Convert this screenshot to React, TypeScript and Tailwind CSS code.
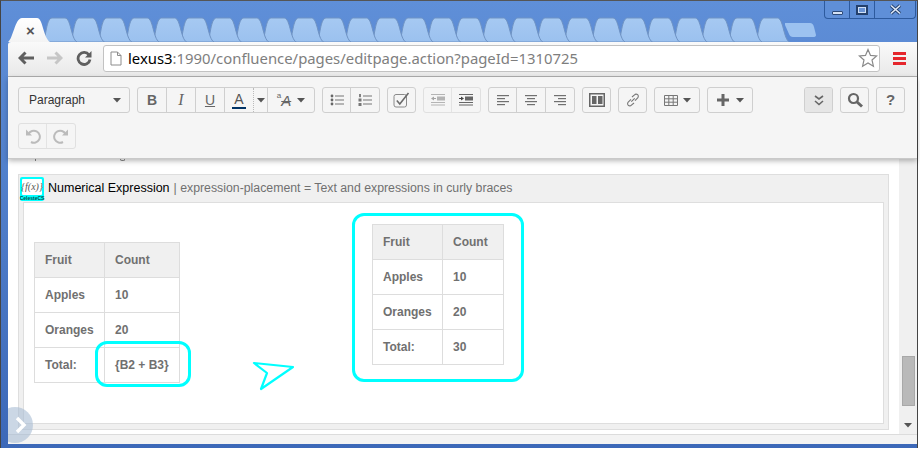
import React from "react";

const tabXs = Array.from({ length: 27 }, (_, i) => 45 + i * 27.4);

function TabStrip() {
  return (
    <div className="relative h-[41px] shrink-0">
      <svg width="920" height="41" className="block -ml-[8px]">
        <defs>
          <linearGradient id="tabg" x1="0" y1="0" x2="0" y2="1">
            <stop offset="0" stopColor="#a6c9f2" />
            <stop offset="1" stopColor="#9bc1ef" />
          </linearGradient>
          <linearGradient id="act" x1="0" y1="0" x2="0" y2="1">
            <stop offset="0" stopColor="#ffffff" />
            <stop offset="1" stopColor="#f4f4f4" />
          </linearGradient>
        </defs>
        {[...tabXs].reverse().map((x, i) => (
          <path
            key={i}
            d={`M${x - 2} 41 C${x + 1} 38 ${x + 1} 17 ${x + 7} 17 L${x + 20} 17 C${x + 26} 17 ${x + 26} 38 ${x + 32} 41 Z`}
            fill="url(#tabg)"
            stroke="#6f93c4"
            strokeWidth="1"
          />
        ))}
        <path d="M8 41 C13 38 15 17 22 17 L37 17 C43 17 43 36 50 41 Z" fill="url(#act)" />
        <path d="M785 22 L810 22 Q813 22 814 26 L816 34 Q816 36 813 36 L793 36 Q790 36 789 33 L785 24 Z" fill="#9cc2f0" />
      </svg>
      <span className="absolute left-[18px] top-[22px] text-[15px] leading-[15px] font-bold text-[#555] font-['Liberation_Sans',sans-serif]">×</span>
      <div className="absolute left-[816px] top-0 w-[92px] h-[18px] flex border border-t-0 border-[#2d5a9e] rounded-b-[4px] bg-[#5f8fd8]">
        <div className="w-[25px] border-r border-[#2d5a9e] flex items-end justify-center pb-[3px]"><div className="w-[11px] h-[4px] rounded-[1px] bg-[#d5e2f5] border border-[#2d4a78]" /></div>
        <div className="w-[25px] border-r border-[#2d5a9e] flex items-center justify-center"><div className="w-[12px] h-[10px] border-2 border-[#24406c] bg-[#cfdff5] flex items-center justify-center"><div className="w-[6px] h-[4px] bg-[#6a94d6]" /></div></div>
        <div className="flex-1 flex items-center justify-center">
          <svg width="13" height="11" viewBox="0 0 13 11"><path d="M2 1.5 L11 9.5 M11 1.5 L2 9.5" stroke="#24406c" strokeWidth="3.4" /><path d="M2 1.5 L11 9.5 M11 1.5 L2 9.5" stroke="#dfe9f8" strokeWidth="1.6" /></svg>
        </div>
      </div>
    </div>
  );
}

function Omnibar() {
  return (
    <div className="h-[35px] shrink-0 flex items-center bg-gradient-to-b from-[#fafafa] to-[#e9e9e9] border-b border-[#b0b0b0] pl-[10px] pb-[2px] rounded-tl-[3px]">
      <svg width="16" height="14" viewBox="0 0 16 14"><path d="M7.5 1.5 L2 7 L7.5 12.5 M2.5 7 H16" fill="none" stroke="#5f5f5f" strokeWidth="3" /></svg>
      <svg width="16" height="14" viewBox="0 0 16 14" className="ml-[13px]"><path d="M8.5 1.5 L14 7 L8.5 12.5 M13.5 7 H0" fill="none" stroke="#c6c6c6" strokeWidth="3" /></svg>
      <svg width="16" height="16" viewBox="0 0 16 16" className="ml-[13px]"><path d="M13 5 A6 6 0 1 0 14 9.5" fill="none" stroke="#5f5f5f" strokeWidth="2.8" /><path d="M15.5 1 V7.5 H9 Z" fill="#5f5f5f" /></svg>
      <div className="flex-1 ml-[11px] mr-[13px] h-[27px] bg-white border border-[#c2c2c2] rounded-[3px] flex items-center pl-[6px] pr-0">
        <svg width="12" height="15" viewBox="0 0 12 15" className="mr-[6px] shrink-0"><path d="M1 1 H7.5 L11 4.5 V14 H1 Z M7.5 1 V4.5 H11" fill="#fff" stroke="#8c8c8c" /></svg>
        <span className="text-[14.87px] leading-[20px] text-[#7e7e7e] whitespace-nowrap font-['Noto_Sans',sans-serif]"><span className="text-black">lexus3</span>:1990/confluence/pages/editpage.action?pageId=1310725</span>
        <svg width="20" height="20" viewBox="0 0 20 20" className="ml-auto mr-[1px]"><path d="M10 1.5 L12.5 7.4 L18.6 7.9 L14 12 L15.4 18.2 L10 15 L4.6 18.2 L6 12 L1.4 7.9 L7.5 7.4 Z" fill="#fff" stroke="#8a8a8a" strokeWidth="1.2" /></svg>
      </div>
      <div className="w-[13px] mr-[11px] flex flex-col gap-[2px]">
        <div className="h-[3px] bg-[#e5262c]" /><div className="h-[3px] bg-[#e5262c]" /><div className="h-[3px] bg-[#e5262c]" />
      </div>
    </div>
  );
}

const Caret = ({ c = "#555" }: { c?: string }) => <svg width="8" height="5" viewBox="0 0 8 5"><path d="M0 0 H8 L4 4.5 Z" fill={c} /></svg>;

function Btn({ w = 28, children, dim, active }: { w?: number; children?: React.ReactNode; dim?: boolean; active?: boolean }) {
  return (
    <div
      style={{ width: w }}
      className={`h-full flex items-center justify-center border-r border-[#cfcfcf] last:border-r-0 ${active ? "bg-[#e6e6e6] rounded-[2px]" : ""} ${dim ? "opacity-45" : ""}`}
    >
      {children}
    </div>
  );
}

const Group = ({ children, dim }: { children: React.ReactNode; dim?: boolean }) => (
  <div className={`flex h-[26px] border rounded-[3px] bg-[#f5f5f5] ${dim ? "border-[#e0e0e0]" : "border-[#cfcfcf]"}`}>{children}</div>
);

const Lines = ({ rows }: { rows: [number, number][] }) => (
  <svg width="14" height="12" viewBox="0 0 14 12">
    {rows.map(([x, w], i) => <rect key={i} x={x} y={i * 3 + 1} width={w} height="1.2" fill="#707070" />)}
  </svg>
);

function Toolbar() {
  const f = "font-['Liberation_Serif',serif]";
  return (
    <div className="h-[82px] shrink-0 bg-[#f5f5f5] pt-[10px] pl-[10px] pr-[12px] flex flex-col gap-[10px] border-b border-[#c9c9c9] shadow-[0_2px_5px_rgba(0,0,0,0.28)] relative z-10">
      <div className="flex gap-[7px] items-center">
        <Group>
          <div className="w-[110px] flex items-center justify-between pl-[10px] pr-[8px] text-[12px] text-[#333] font-['Liberation_Sans',sans-serif]">Paragraph <Caret /></div>
        </Group>
        <Group>
          <Btn w={29}><span className="font-['Liberation_Sans',sans-serif] font-bold text-[14px] text-[#666]">B</span></Btn>
          <Btn w={29}><span className={`${f} italic text-[16px] text-[#666]`}>I</span></Btn>
          <Btn w={29}><span className="font-['Liberation_Sans',sans-serif] text-[14px] leading-[14px] text-[#666] underline">U</span></Btn>
          <div className="w-[29px] flex flex-col items-center justify-center border-r border-dotted border-[#bbb]">
            <span className="font-['Liberation_Sans',sans-serif] text-[14px] leading-[14px] text-[#555]">A</span>
            <div className="w-[14px] h-[2px] bg-[#003366] mt-[1px]" />
          </div>
          <Btn w={14}><Caret c="#555" /></Btn>
          <div className="w-[46px] flex items-center justify-center gap-[6px]">
            <span className="font-['Liberation_Sans',sans-serif] text-[#666] leading-none flex"><span className="text-[8px] -mt-[1px]">a</span><span className="italic text-[15px] line-through">A</span></span>
            <Caret />
          </div>
        </Group>
        <Group>
          <Btn><svg width="14" height="12" viewBox="0 0 14 12"><circle cx="2" cy="2" r="1.4" fill="#666"/><circle cx="2" cy="6" r="1.4" fill="#666"/><circle cx="2" cy="10" r="1.4" fill="#666"/><rect x="5" y="1.5" width="9" height="1" fill="#777"/><rect x="5" y="5.5" width="9" height="1" fill="#777"/><rect x="5" y="9.5" width="9" height="1" fill="#777"/></svg></Btn>
          <Btn><svg width="14" height="12" viewBox="0 0 14 12"><rect x="1.2" y="0" width="1.6" height="3.2" fill="#666"/><rect x="0.5" y="4.5" width="3" height="3" fill="#777"/><rect x="0.5" y="9" width="3" height="3" fill="#777"/><rect x="5" y="1.5" width="9" height="1" fill="#777"/><rect x="5" y="5.5" width="9" height="1" fill="#777"/><rect x="5" y="9.5" width="9" height="1" fill="#777"/></svg></Btn>
        </Group>
        <Group>
          <Btn w={27}><svg width="18" height="16" viewBox="0 0 18 16"><rect x="1" y="2.5" width="12.5" height="12.5" rx="2" fill="none" stroke="#8a8a8a" strokeWidth="1"/><path d="M3.8 8.5 L6.8 12 L15.5 1" fill="none" stroke="#6a6a6a" strokeWidth="1.6"/></svg></Btn>
        </Group>
        <Group dim>
          <Btn dim><svg width="14" height="12" viewBox="0 0 14 12"><rect x="0" y="0" width="14" height="1" fill="#666"/><rect x="6" y="2.5" width="8" height="4" fill="#666"/><path d="M0 4.5 L3 2.5 V6.5 Z M3 4 H5 V5 H3 Z" fill="#444"/><rect x="0" y="8" width="14" height="1" fill="#666"/><rect x="0" y="10.5" width="14" height="1" fill="#666"/></svg></Btn>
          <Btn><svg width="14" height="12" viewBox="0 0 14 12"><rect x="0" y="0" width="14" height="1" fill="#666"/><rect x="6" y="2.5" width="8" height="4" fill="#666"/><path d="M5 4.5 L2 2.5 V6.5 Z M0 4 H2 V5 H0 Z" fill="#444"/><rect x="0" y="8" width="14" height="1" fill="#666"/><rect x="0" y="10.5" width="14" height="1" fill="#666"/></svg></Btn>
        </Group>
        <Group>
          <Btn><Lines rows={[[1,12],[1,8],[1,12],[1,8]]} /></Btn>
          <Btn w={29}><Lines rows={[[1,12],[3,8],[1,12],[3,8]]} /></Btn>
          <Btn><Lines rows={[[1,12],[5,8],[1,12],[5,8]]} /></Btn>
        </Group>
        <Group>
          <Btn w={27}><svg width="16" height="14" viewBox="0 0 16 14"><rect x="0.75" y="0.75" width="14.5" height="12.5" fill="none" stroke="#666" strokeWidth="1.5"/><rect x="3" y="3" width="4.5" height="8" fill="#666"/><rect x="9" y="3" width="4.5" height="8" fill="#666"/></svg></Btn>
        </Group>
        <Group>
          <Btn w={27}><svg width="14" height="14" viewBox="0 0 14 14"><path d="M6 4 L8.5 1.8 a2 2 0 0 1 3.2 3 L9 7.6 M8 10 L5.4 12.2 a2 2 0 0 1 -3.2 -3 L5 6.4 M5.3 8.7 L8.7 5.3" fill="none" stroke="#777" strokeWidth="1.1"/></svg></Btn>
        </Group>
        <Group>
          <div className="w-[44px] flex items-center justify-center gap-[5px]">
            <svg width="14" height="11" viewBox="0 0 14 11"><path d="M0.5 0.5 H13.5 V10.5 H0.5 Z M0.5 3.8 H13.5 M0.5 7.2 H13.5 M4.8 0.5 V10.5 M9.2 0.5 V10.5" fill="none" stroke="#777" /></svg>
            <Caret />
          </div>
        </Group>
        <Group>
          <div className="w-[44px] flex items-center justify-center gap-[7px]">
            <svg width="12" height="12" viewBox="0 0 12 12"><path d="M4.5 0 H7.5 V4.5 H12 V7.5 H7.5 V12 H4.5 V7.5 H0 V4.5 H4.5 Z" fill="#666" /></svg>
            <Caret />
          </div>
        </Group>
        <div className="ml-auto flex gap-[7px]">
          <Group><Btn w={27} active><svg width="10" height="11" viewBox="0 0 10 11"><path d="M1 1 L5 4 L9 1 M1 6 L5 9.5 L9 6" fill="none" stroke="#666" strokeWidth="1.6" /></svg></Btn></Group>
          <Group><Btn w={27}><svg width="16" height="16" viewBox="0 0 16 16"><circle cx="6.5" cy="6.5" r="4.5" fill="none" stroke="#666" strokeWidth="2.2" /><path d="M10 10 L15 14.5" stroke="#666" strokeWidth="3" /></svg></Btn></Group>
          <Group><Btn w={27}><span className="font-['Liberation_Sans',sans-serif] font-bold text-[15px] text-[#666]">?</span></Btn></Group>
        </div>
      </div>
      <div className="flex">
        <Group dim>
          <Btn dim><svg width="16" height="16" viewBox="0 0 16 16"><path d="M3.5 6 A6 6 0 1 1 6 14" fill="none" stroke="#777" strokeWidth="2"/><path d="M1 1.5 V7.5 H7 Z" fill="#777"/></svg></Btn>
          <Btn dim><svg width="16" height="16" viewBox="0 0 16 16"><path d="M12.5 6 A6 6 0 1 0 10 14" fill="none" stroke="#777" strokeWidth="2"/><path d="M15 1.5 V7.5 H9 Z" fill="#777"/></svg></Btn>
        </Group>
      </div>
    </div>
  );
}

function DataTable({ total, widths }: { total: string; widths: [string, string] }) {
  const rows = [["Apples", "10"], ["Oranges", "20"], ["Total:", total]];
  const cell = "h-[35px] px-[10px] border border-[#dddddd] text-left";
  return (
    <table className="border-collapse text-[12px] font-bold text-[#707070] font-['Liberation_Sans',sans-serif]">
      <thead>
        <tr className="bg-[#f0f0f0]">
          <th className={`${cell} ${widths[0]}`}>Fruit</th>
          <th className={`${cell} ${widths[1]}`}>Count</th>
        </tr>
      </thead>
      <tbody>
        {rows.map((r) => (
          <tr key={r[0]}>
            <td className={cell}>{r[0]}</td>
            <td className={cell}>{r[1]}</td>
          </tr>
        ))}
      </tbody>
    </table>
  );
}

function Content() {
  return (
    <div className="relative flex-1 flex flex-col min-h-0 bg-white">
      <div className="flex-1 flex min-h-0">
        <div className="relative flex-1 pl-[10px] pt-[15px] overflow-hidden">
          <div className="absolute left-[27px] top-0 w-px h-[2px] bg-[#888]" />
          <div className="absolute left-[112px] top-0 w-[5px] h-[2px] rounded-b-full border-b border-x border-[#888]" />
          <div className="w-[871px] h-[256px] border border-[#dedede] bg-[#f0f0f0] flex flex-col px-[4px] pb-[5px]">
            <div className="h-[27px] shrink-0 flex items-center font-['Liberation_Sans',sans-serif]">
              <div className="relative w-[24px] h-[24px] ml-[-3px] mr-[4px] bg-[#00ffff] rounded-[2px] p-[2px] pb-0 flex flex-col items-center shrink-0 z-10">
                <div className="w-full h-[16px] bg-white rounded-[1px] flex items-center justify-center text-[#555] italic text-[10px] leading-none font-['Liberation_Serif',serif]">{"{f(x)}"}</div>
                <span className="text-[5px] leading-[6px] font-bold text-[#004d4d] whitespace-nowrap">CelesteCS</span>
              </div>
              <span className="text-black text-[12.5px]">Numerical Expression</span>
              <span className="text-[#707070] ml-[4px] text-[12.3px]">| expression-placement = Text and expressions in curly braces</span>
            </div>
            <div className="flex-1 bg-white border border-[#dedede] flex items-start">
              <div className="ml-[10px] mt-[39px]"><DataTable total="{B2 + B3}" widths={["w-[70px]", "w-[75px]"]} /></div>
              <div className="ml-[192px] mt-[21px]"><DataTable total="30" widths={["w-[70px]", "w-[61px]"]} /></div>
            </div>
          </div>
        </div>
        <div className="w-[18px] shrink-0 bg-[#f0f0f0] flex flex-col items-center justify-end pb-[6px]">
          <div className="w-[13px] h-[50px] bg-[#b9b9b9] border border-[#a8a8a8] mb-[17px]" />
          <svg width="8" height="5" viewBox="0 0 8 5"><path d="M0 0 H8 L4 4.5 Z" fill="#555" /></svg>
        </div>
      </div>
      <div className="h-[10px] shrink-0 bg-[#f3f3f3] border-t border-[#dcdcdc]" />
    </div>
  );
}

export default function App() {
  return (
    <div className="relative w-[920px] h-[450px] overflow-hidden bg-white">
      <div className="h-[448px] w-[918px] flex flex-col bg-gradient-to-b from-[#5f8fd8] to-[#3c68b8] border-t border-[#555] border-x border-x-[#444] pl-[7px] pb-[4px]">
        <TabStrip />
        <Omnibar />
        <Toolbar />
        <Content />
      </div>

      <div className="absolute left-[95px] top-[341px] w-[96px] h-[46px] border-[3px] border-[#00ffff] rounded-[12px]" />
      <div className="absolute left-[352px] top-[213px] w-[172px] h-[169px] border-[3px] border-[#00ffff] rounded-[12px]" />
      <svg width="46" height="34" viewBox="0 0 46 34" className="absolute left-[251px] top-[360px]">
        <path d="M3 3 L42 7 L10 29 L16 13 Z" fill="none" stroke="#00ffff" strokeWidth="2.2" strokeLinejoin="round" />
      </svg>
      <div className="absolute left-[8px] top-[407px] w-[25px] h-[36px] overflow-hidden">
        <div className="-ml-[11px] w-[36px] h-[36px] rounded-full bg-[#a9bcd4]/60 flex items-center justify-center">
          <svg width="14" height="18" viewBox="0 0 14 18" className="ml-[9px]"><path d="M4 2 L11 9 L4 16" fill="none" stroke="#fff" strokeWidth="3.4" /></svg>
        </div>
      </div>
    </div>
  );
}
